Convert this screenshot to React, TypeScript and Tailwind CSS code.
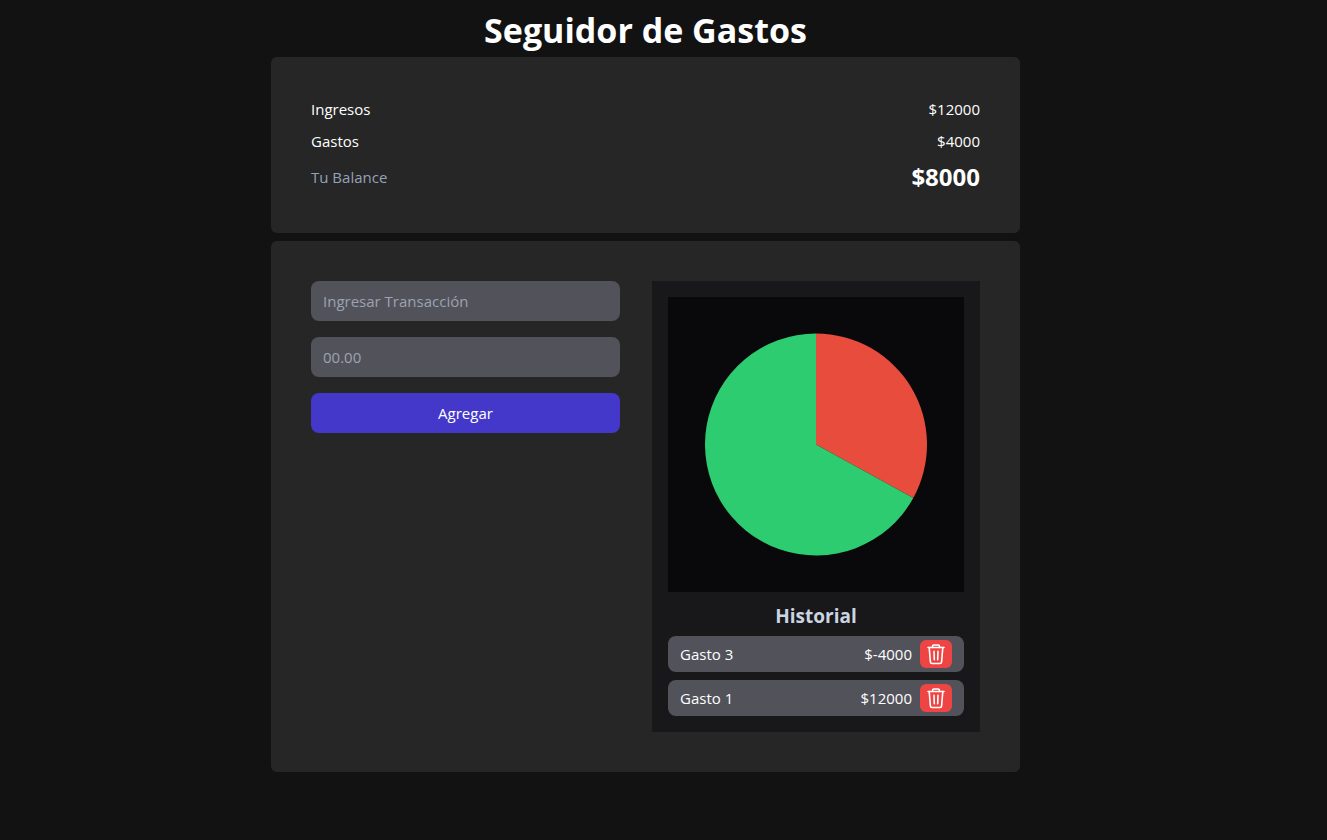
import { useState } from "react";
import type { FormEvent } from "react";

type Transaction = { id: number; description: string; amount: number };

const initialTransactions: Transaction[] = [
  { id: 1, description: "Gasto 3", amount: -4000 },
  { id: 2, description: "Gasto 1", amount: 12000 },
];

function TrashIcon() {
  return (
    <svg
      viewBox="0 0 24 24"
      className="h-6 w-6"
      fill="none"
      stroke="currentColor"
      strokeWidth="1.6"
      strokeLinecap="round"
      strokeLinejoin="round"
      aria-hidden="true"
    >
      <path d="M4 5.5h16" />
      <path d="M5.2 5.5l1.2 14.4c.07.9.75 1.6 1.65 1.6h7.9c.9 0 1.58-.7 1.65-1.6l1.2-14.4" />
      <path d="M8.5 5.5V4.4c0-.85.55-1.4 1.4-1.4h4.2c.85 0 1.4.55 1.4 1.4v1.1" />
      <path d="M10 9.2l.3 8.6M14 9.2l-.3 8.6" />
    </svg>
  );
}

function ExpenseChart({ percent }: { percent: number }) {
  const angle = (percent / 100) * 2 * Math.PI;
  const x = 148 + 111 * Math.sin(angle);
  const y = 147.5 - 111 * Math.cos(angle);
  const large = percent > 50 ? 1 : 0;
  const rest = percent > 50 ? 0 : 1;
  return (
    <div className="bg-[#09090b]">
      <svg viewBox="0 0 296 295" className="block w-full" role="img" aria-label="Gastos e ingresos">
        {percent > 0 ? (
          <>
            <path d={`M148 147.5V36.5A111 111 0 ${large} 1 ${x} ${y}Z`} fill="#e74c3c" />
            <path d={`M148 147.5L${x} ${y}A111 111 0 ${rest} 1 148 36.5Z`} fill="#2ecc71" />
          </>
        ) : (
          <circle cx="148" cy="147.5" r="111" fill="#2ecc71" />
        )}
      </svg>
    </div>
  );
}

export default function App() {
  const [transactions, setTransactions] = useState(initialTransactions);
  const [description, setDescription] = useState("");
  const [amount, setAmount] = useState("");

  const income = transactions.filter((t) => t.amount > 0).reduce((sum, t) => sum + t.amount, 0);
  const expense = transactions.filter((t) => t.amount < 0).reduce((sum, t) => sum - t.amount, 0);
  const percent = income > 0 ? Math.min(99, Math.round((expense / income) * 100)) : 0;

  const onSubmit = (e: FormEvent) => {
    e.preventDefault();
    if (!description || !Number(amount)) return;
    setTransactions([...transactions, { id: Date.now(), description, amount: Number(amount) }]);
    setDescription("");
    setAmount("");
  };

  return (
    <div className="min-h-screen bg-[#121212] pt-2.5 pr-9 pb-8 font-['Open_Sans',sans-serif] text-[15px] leading-6 text-white">
      <main className="mx-auto w-full max-w-[749px]">
        <h1 className="pb-1.5 text-center text-[34px] leading-[41px] font-bold">Seguidor de Gastos</h1>

        <section className="flex flex-col gap-2 rounded-md bg-[#262626] p-10">
          <div className="flex justify-between">
            <h4>Ingresos</h4>
            <p>${income}</p>
          </div>
          <div className="flex justify-between">
            <h4>Gastos</h4>
            <p>${expense}</p>
          </div>
          <div className="flex items-center justify-between">
            <h3 className="text-[#94a3b8]">Tu Balance</h3>
            <p className="text-2xl font-bold">${income - expense}</p>
          </div>
        </section>

        <section className="mt-2 flex flex-col gap-8 rounded-md bg-[#262626] p-10 md:flex-row">
          <form onSubmit={onSubmit} className="flex flex-1 flex-col gap-4">
            <input
              type="text"
              aria-label="Ingresar Transacción"
              placeholder="Ingresar Transacción"
              value={description}
              onChange={(e) => setDescription(e.target.value)}
              className="h-10 w-full rounded-lg bg-[#52525b] px-3 placeholder:text-[#9ca3af]"
            />
            <input
              type="text"
              inputMode="decimal"
              aria-label="Monto"
              placeholder="00.00"
              value={amount}
              onChange={(e) => setAmount(e.target.value)}
              className="h-10 w-full rounded-lg bg-[#52525b] px-3 placeholder:text-[#9ca3af]"
            />
            <button type="submit" className="h-10 w-full rounded-lg bg-[#4338ca]">
              Agregar
            </button>
          </form>

          <div className="bg-[#18181b] p-4 md:w-[328px]">
            <ExpenseChart percent={percent} />
            <h3 className="mt-2.5 mb-1.5 text-center text-[19px] leading-7 font-bold text-[#cbd5e1]">Historial</h3>
            <ul className="flex flex-col gap-2">
              {transactions.map((t) => (
                <li key={t.id} className="flex items-center justify-between rounded-lg bg-[#52525b] px-3 py-1">
                  <p>{t.description}</p>
                  <div className="flex items-center gap-2">
                    <span>${t.amount}</span>
                    <button
                      type="button"
                      aria-label={`Eliminar ${t.description}`}
                      onClick={() => setTransactions(transactions.filter((item) => item.id !== t.id))}
                      className="flex h-7 w-8 items-center justify-center rounded-md bg-[#ef4444]"
                    >
                      <TrashIcon />
                    </button>
                  </div>
                </li>
              ))}
            </ul>
          </div>
        </section>
      </main>
    </div>
  );
}
